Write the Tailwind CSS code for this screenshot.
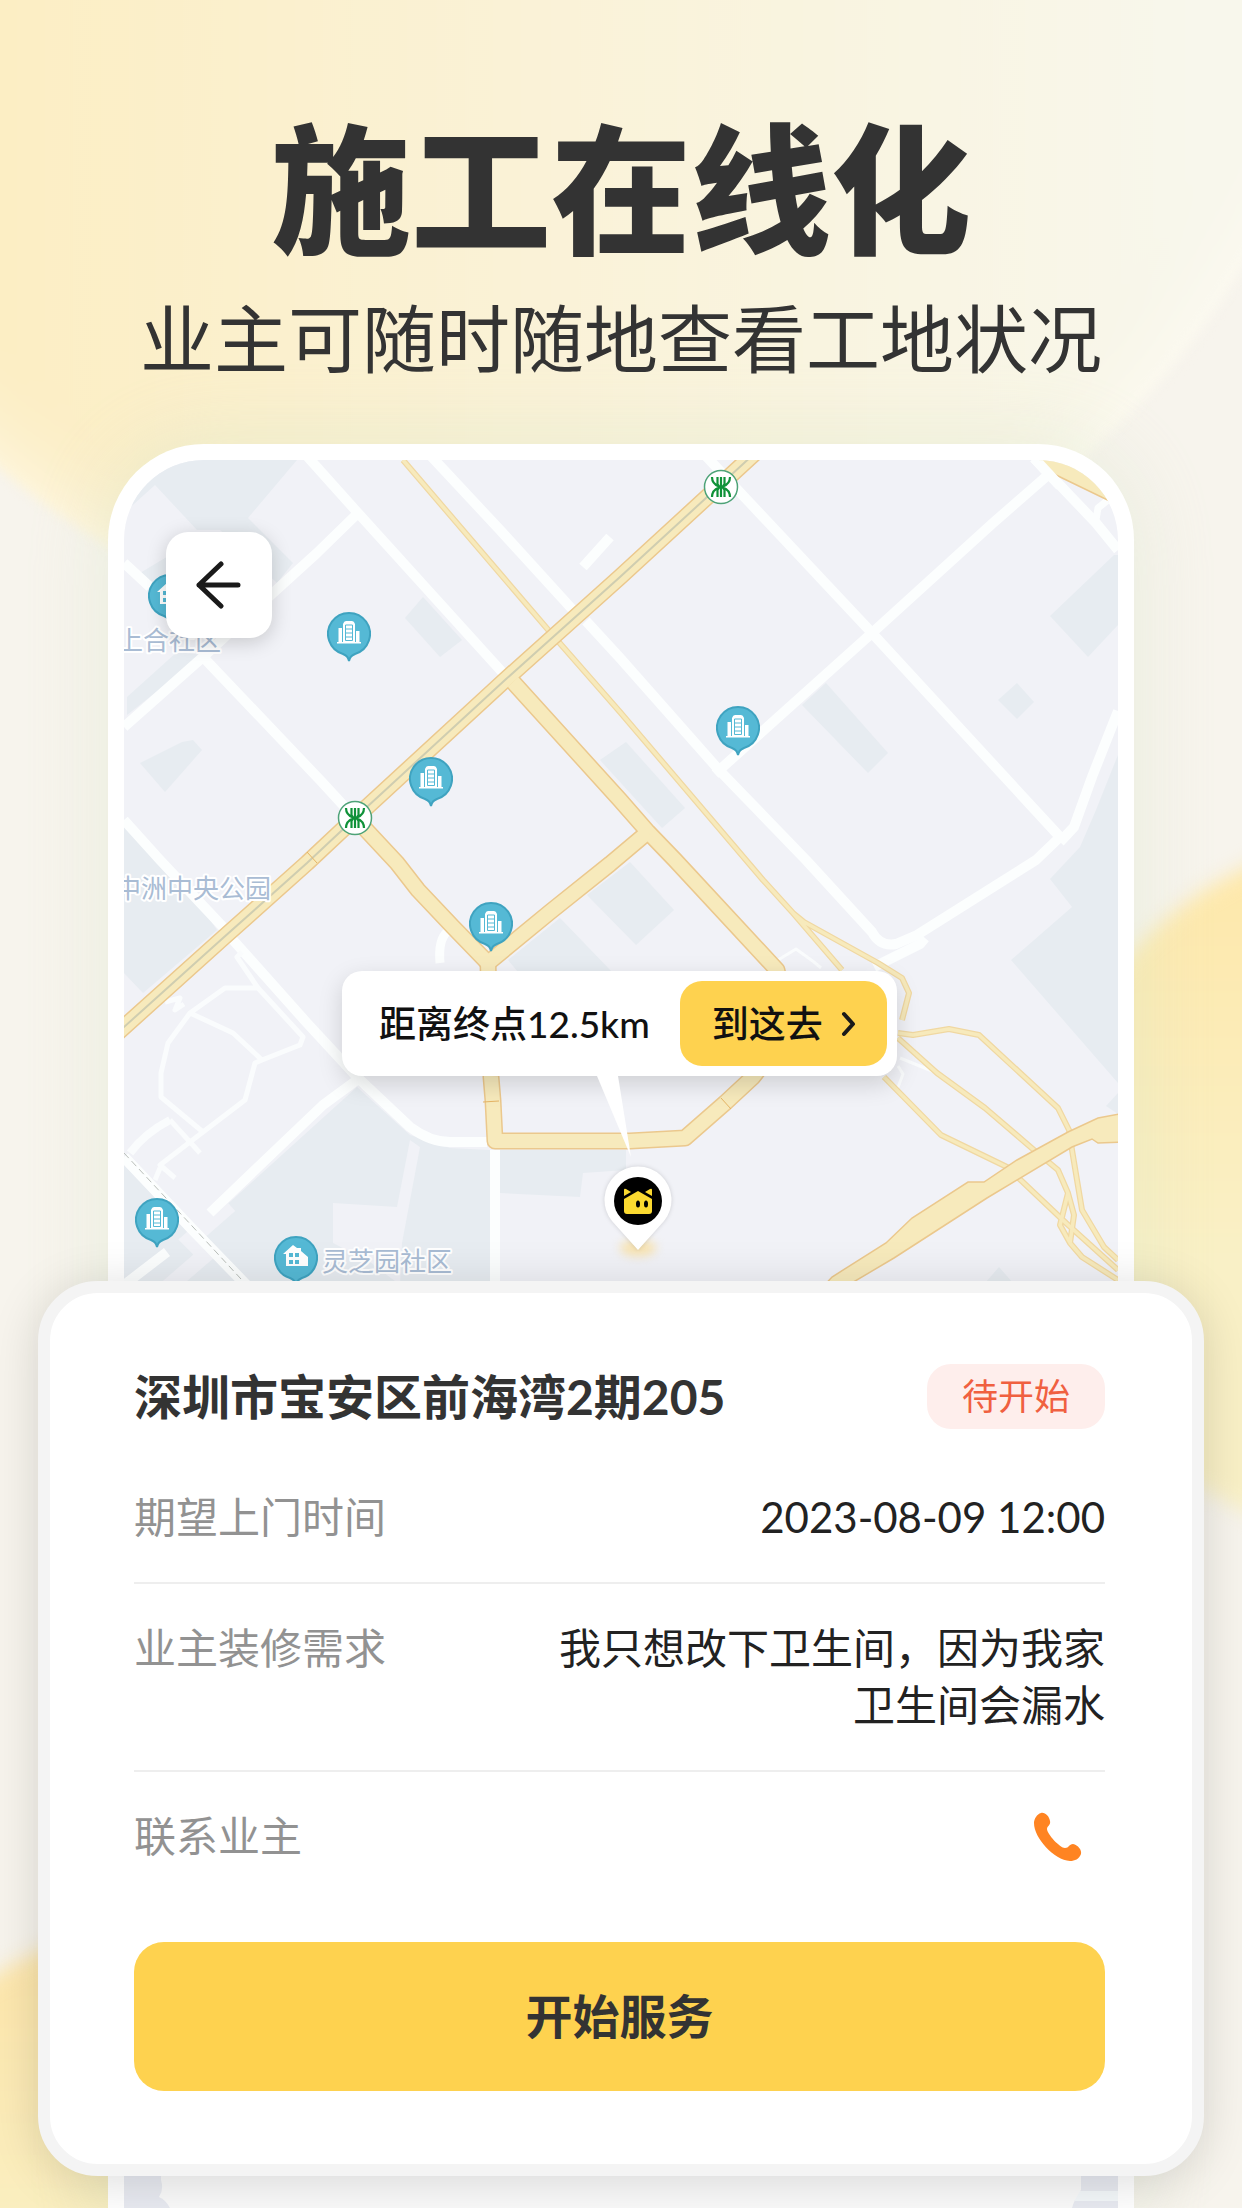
<!DOCTYPE html>
<html lang="zh-CN">
<head>
    <meta charset="UTF-8">
    <meta name="viewport" content="width=device-width, initial-scale=1.0">
    <title>施工在线化</title>
    <!-- Tailwind CSS -->
    <script src="https://cdn.jsdelivr.net/npm/@tailwindcss/browser@4"></script>
    <style>
        body {
            font-family: Lato, 'Noto Sans CJK SC', sans-serif;
        }
    </style>
</head>
<body class="bg-[#f7f4ed] text-[#333333]">
    <main class="relative min-h-screen overflow-hidden flex flex-col">
        <!-- Background glows -->
        <div class="absolute -left-[295px] -top-[995px] size-[1660px] rounded-full blur-[6px] bg-linear-to-r from-[#fceec4] from-18% via-[#faf2d7] via-50% to-[#f8f7ec] to-90% shadow-[inset_0_0_90px_rgba(255,252,244,0.9)]"></div>
        <div class="absolute left-[1040px] top-[835px] size-[710px] rounded-full blur-[10px] bg-linear-to-b from-[#fee7a8] to-[#f9f0c6] to-60%"></div>
        <div class="absolute -left-[170px] top-[1920px] size-[710px] rounded-full blur-[10px] bg-linear-to-b from-[#fee5a8] to-[#f9f0c4] to-50%"></div>

        <header class="relative pt-[109px] text-center">
            <h1 class="text-[140px] leading-[160px] font-black">施工在线化</h1>
            <p class="mt-[20px] text-[74px] leading-[100px]">业主可随时随地查看工地状况</p>
        </header>

        <section class="relative mt-[55px] grow grid">
            <!-- Map -->
            <div class="[grid-area:1/1] relative mx-[108px] border-16 border-b-0 border-white rounded-t-[96px] overflow-hidden bg-[#f1f2f7] shadow-[0_0_80px_rgba(215,228,200,0.45)]">
                <svg class="absolute inset-0 size-full" viewBox="124 460 994 1748" preserveAspectRatio="xMidYMin slice" fill="none" aria-label="地图">
                    <defs>
                        <symbol id="pin" viewBox="0 0 44 52">
                            <path d="M22 50c-1-4-2-5-6-7A21 21 0 1 1 28 43c-4 2-5 3-6 7z" fill="#55b9d5" stroke="#3fa3c0" stroke-width="2"/>
                        </symbol>
                        <symbol id="tower" viewBox="0 0 44 52">
                            <use href="#pin"/>
                            <path d="M10 31h24v1.500H10zM11.500 17h3.500v14.500h-3.500zM29 20h3.500v11.500H29z" fill="#fff"/>
                            <path d="M16 31.500V13q1-3 3-3h6q2 0 3 3v18.500z" fill="#fff"/>
                            <path d="M18.500 14h7v15.500h-7zM18.500 18h7M18.500 22h7M18.500 26h7" stroke="#55b9d5" stroke-width="1"/>
                        </symbol>
                        <symbol id="house" viewBox="0 0 44 52">
                            <use href="#pin"/>
                            <path d="M9 19 19 10l4 3h4v3l7 6v9H12V19z" fill="#fff"/>
                            <path d="M15 18h4v4h-4zM21 18h4v4h-4zM15 25h4v4h-4zM21 25h4v4h-4z" fill="#55b9d5"/>
                        </symbol>
                        <symbol id="metro" viewBox="0 0 36 36">
                            <circle cx="18" cy="18" r="16.500" fill="#fff" stroke="#4ea378" stroke-width="1.500"/>
                            <path d="M9 8c0 6 3 8 7 9.500v1C12 20 9 22 9 28M27 8c0 6-3 8-7 9.500v1C24 20 27 22 27 28M14.500 8v7l2 3-2 3v7M18 8v20M21.500 8v7l-2 3 2 3v7" stroke="#0f9138" stroke-width="2.200"/>
                        </symbol>
                    </defs>

                    <!-- Blocks -->
                    <g fill="#e7ecf1">
                        <path d="M297 460 248 518 293 563 277 583 220 530 197 530 155 485 124 513V460z"/>
                        <path d="M140 573 170 555 166 600z"/>
                        <path d="M423 597 462 640 440 657 405 618z"/>
                        <path d="M140 763 182 742 193 740 202 750 165 792z"/>
                        <path d="M127 715V697L177 652 203 655z"/>
                        <path d="M124 827 183 880 217 930 143 993 124 973z"/>
                        <path d="M826 683 888 753 868 773 802 705z"/>
                        <path d="M1017 683 1034 702 1017 719 998 700z"/>
                        <path d="M1114 555H1118V625L1088 657 1050 616z"/>
                        <path d="M1118 755 1096 810 1080 847 1050 879 1072 907 1011 960 1118 1083z"/>
                        <path d="M1118 1093 1106 1106 1118 1114z"/>
                        <path d="M626 742 685 808 662 828 600 760z"/>
                        <path d="M630 862 674 910 636 945 587 895z"/>
                        <path d="M560 918 612 972H518L508 960z"/>
                        <path d="M357 1087 410 1135 450 1148 490 1150 495 1290H124V1165L193 1238 210 1220z"/>
                        <path d="M500 1150H626V1170L583 1173 580 1197 500 1193z"/>
                        <path d="M999 1267 1019 1290H979z"/>
                    </g>
                    <path d="M333 1203 397 1207 410 1140 420 1147 402 1243 400 1285 370 1262 333 1243z" fill="#f1f2f7"/>
                    <path d="M230 1205 190 1240 205 1255 130 1320" stroke="#f1f2f7" stroke-width="16"/>

                    <!-- Side streets -->
                    <g stroke="#fcfefe" stroke-width="10" stroke-linejoin="round">
                        <path d="M306 455 358 513 503 673M358 513 317 553 273 593 203 657 124 727"/>
                        <path d="M430 455 500 530 572 609M586 621 620 658 719 770 806 860 872 932Q880 947 896 944L917 935 1036 860 1060 837"/>
                        <path d="M925 938 920 944 874 967M704 454 872 633 1060 837"/>
                        <path d="M715 774 872 633 993 523 1048 475M1034 458 1096 523 1118 550"/>
                        <path d="M1096 520 1098 508 1108 500" stroke-width="7"/>
                        <path d="M1060 842 1074 827 1092 777 1118 711"/>
                        <path d="M203 657 320 780 355 818M124 820 160 860 223 927M233 940 307 1023 357 1077 410 1127Q430 1142 450 1142H487"/>
                        <path d="M357 1080 323 1105 210 1213M495 1150V1300M124 563 150 587M610 537 583 567M167 1252 124 1285"/>
                        <path d="M447 932Q438 940 440 963" stroke-width="9"/>
                        <path d="M124 1157 193 1230 253 1292" stroke-width="11"/>
                    </g>
                    <path d="M124 1153 193 1227 253 1292" stroke="#b9beb9" stroke-width="1" stroke-dasharray="7 4"/>
                    <g stroke="#fafcfd" stroke-width="5" stroke-linejoin="round">
                        <path d="M225 988 190 1013 168 1043 161 1073V1097L203 1132 245 1100 255 1063 262 1060 300 1045 303 1037 258 988zM190 1013 233 1033 262 1060M258 988 237 957 242 952"/>
                        <path d="M203 1132 160 1165 175 1178M160 1168 155 1180M170 1120 200 1153M165 1002 180 998 175 1010 184 1004"/>
                        <path d="M170 1120Q145 1133 130 1153" stroke-width="8"/>
                        <path d="M778 960 796 949 814 962 821 968M900 1058 937 1073M898 1066 903 1074 897 1090" stroke-width="3"/>
                    </g>

                    <!-- Ramps -->
                    <g stroke-linejoin="round">
                        <path d="M403 460 550 632 620 712 763 880 793 913 842 970M793 913 804 922 878 963 902 978 909 993 902 1020M898 1033 913 1035 949 1029 979 1035 1058 1108 1069 1130 1072 1150 1082 1210 1104 1247 1118 1260M898 1038 937 1073 985 1108 1034 1150 1058 1170 1068 1193 1060 1225 1070 1243 1082 1257 1118 1280M884 1077 941 1135 1007 1167 1066 1223 1118 1270M1068 1193 1074 1215 1070 1243" stroke="#f0d8a2" stroke-width="6"/>
                        <path d="M403 460 550 632 620 712 763 880 793 913 842 970M793 913 804 922 878 963 902 978 909 993 902 1020M898 1033 913 1035 949 1029 979 1035 1058 1108 1069 1130 1072 1150 1082 1210 1104 1247 1118 1260M898 1038 937 1073 985 1108 1034 1150 1058 1170 1068 1193 1060 1225 1070 1243 1082 1257 1118 1280M884 1077 941 1135 1007 1167 1066 1223 1118 1270M1068 1193 1074 1215 1070 1243" stroke="#f7eabc" stroke-width="3.500"/>
                    </g>

                    <!-- Main roads -->
                    <g stroke="#ebc88d" stroke-width="17" stroke-linejoin="round">
                        <path d="M755 453 620 577 505 680 355 818 307 863 223 938 114 1036"/>
                        <path d="M513 682 620 800 648 832 675 860 777 970 790 1030 753 1077 725 1103 685 1138 630 1141H495L493 1101 491 1077 488 963"/>
                        <path d="M355 818 397 863 418 890 453 927 488 963 550 912 610 864 648 832"/>
                    </g>
                    <g stroke="#f7eabc" stroke-width="14" stroke-linejoin="round">
                        <path d="M755 453 620 577 505 680 355 818 307 863 223 938 114 1036"/>
                        <path d="M513 682 620 800 648 832 675 860 777 970 790 1030 753 1077 725 1103 685 1138 630 1141H495L493 1101 491 1077 488 963"/>
                        <path d="M355 818 397 863 418 890 453 927 488 963 550 912 610 864 648 832"/>
                    </g>
                    <path d="M755 453 620 577 505 680 355 818 307 863 223 938 114 1036" stroke="#cfcdb0" stroke-width="2"/>
                    <path d="M307 852 317 863M483 1102 499 1101M721 1098 731 1109" stroke="#e6b565" stroke-width="1"/>
                    <path d="M1124 1113 1098 1118 1068 1132 1017 1160 984 1182H968L912 1218 886 1243 832 1277 820 1290H840L894 1258 987 1198 1072 1147 1092 1139 1098 1143 1124 1142z" fill="#f7eabc" stroke="#ebc88d" stroke-width="1.500"/>
                    <path d="M1030 454 1056 475 1122 507V454z" fill="#f7eabc" stroke="#ebc88d" stroke-width="1.500"/>
                    <path d="M1034 458 1060 486" stroke="#fcfefe" stroke-width="10"/>

                    <!-- Places -->
                    <g font-size="26" fill="#a9bcd4" stroke="#fff" stroke-width="4" paint-order="stroke" stroke-linejoin="round">
                        <text x="117" y="650">上合社区</text>
                        <text x="115" y="898">中洲中央公园</text>
                        <text x="322" y="1271">灵芝园社区</text>
                    </g>
                    <use href="#metro" x="337" y="800" width="36" height="36"/>
                    <use href="#metro" x="703" y="469" width="36" height="36"/>
                    <use href="#house" x="148" y="573" width="44" height="52"/>
                    <use href="#tower" x="327" y="611" width="44" height="52"/>
                    <use href="#tower" x="409" y="756" width="44" height="52"/>
                    <use href="#tower" x="716" y="705" width="44" height="52"/>
                    <use href="#tower" x="469" y="901" width="44" height="52"/>
                    <use href="#tower" x="135" y="1197" width="44" height="52"/>
                    <use href="#house" x="274" y="1235" width="44" height="52"/>

                    <!-- Sheet below the card -->
                    <path d="M124 2150H1118V2208H124z" fill="#e8eaf1"/>
                    <path d="M1075 2196H1118" stroke="#f4f8fa" stroke-width="10"/>
                    <path d="M161 2150H1081V2190Q1074 2200 1072 2208H170Q166 2200 159 2197 164 2190 161 2180z" fill="#fafafa"/>
                </svg>

                <button type="button" aria-label="返回" class="absolute left-[42px] top-[72px] size-[106px] rounded-[22px] bg-white shadow-[0_4px_20px_rgba(0,0,0,0.18)] grid place-items-center">
                    <svg class="size-[48px]" viewBox="0 0 48 48" fill="none" stroke="#1a1a1a" stroke-width="5" stroke-linecap="round" stroke-linejoin="round"><path d="M26 3 4 24l22 21M4 24h39"/></svg>
                </button>

                <!-- Target marker -->
                <svg class="absolute left-[474px] top-[700px] w-[80px] h-[106px]" viewBox="0 0 80 106" fill="none">
                    <ellipse cx="40" cy="88" rx="18" ry="8" fill="#f8e3b0" class="blur-[5px]"/>
                    <path d="M40 90 14 61A33.500 33.500 0 1 1 66 61z" fill="#fff" class="drop-shadow-[0_0_2px_rgba(0,0,0,0.15)]"/>
                    <circle cx="40" cy="41" r="24" fill="#000"/>
                    <path d="M26 39 40 31 54 39V51Q54 54 51 54H29Q26 54 26 51z" fill="#fbd930"/>
                    <path d="M26 36V30Q26 28 28 29L33 32zM54 36V30Q54 28 52 29L47 32z" fill="#fbd930"/>
                    <ellipse cx="40" cy="44" rx="2" ry="3.500" fill="#000"/>
                    <ellipse cx="48" cy="44" rx="2" ry="3.500" fill="#000"/>
                </svg>

                <div class="absolute left-[218px] top-[511px] flex items-center h-[105px] pl-[37px] pr-[10px] gap-[30px] rounded-[20px] bg-white text-[#111111] text-[37px] font-medium whitespace-nowrap shadow-[0_8px_24px_rgba(0,0,0,0.15)]">
                    <span>距离终点12.5km</span>
                    <button type="button" class="flex items-center gap-[18px] h-[85px] w-[207px] pl-[32px] rounded-[22px] bg-[#fed24f]">
                        到这去
                        <svg class="w-[16px] h-[26px]" viewBox="0 0 16 26" fill="none" stroke="#1a1a1a" stroke-width="4" stroke-linecap="round" stroke-linejoin="round"><path d="m3 3 9 10-9 10"/></svg>
                    </button>
                    <svg class="absolute left-[255px] top-full w-[36px] h-[82px]" viewBox="0 0 36 82"><path d="M0 0h21l13 81z" fill="#fff"/></svg>
                </div>
            </div>

            <!-- Order card -->
            <article class="[grid-area:1/1] self-start relative mx-[38px] mt-[837px] mb-[32px] border-12 border-[#f4f4f4] rounded-[60px] bg-white pl-[84px] pr-[87px] pt-[71px] pb-[73px] shadow-[0_6px_50px_rgba(0,0,0,0.14)]">
                <div class="flex items-center justify-between">
                    <h2 class="text-[48px] leading-[65px] font-bold">深圳市宝安区前海湾2期205</h2>
                    <span class="rounded-[24px] bg-[#feeeec] px-[35px] text-[36px] leading-[65px] text-[#f06040]">待开始</span>
                </div>
                <dl class="mt-[60px] text-[42px] leading-[57px]">
                    <div class="flex justify-between pb-[36px] border-b-2 border-[#eeeeee]">
                        <dt class="text-[#929292]">期望上门时间</dt>
                        <dd class="text-[#222222]">2023-08-09 12:00</dd>
                    </div>
                    <div class="flex justify-between py-[36px] border-b-2 border-[#eeeeee]">
                        <dt class="text-[#929292]">业主装修需求</dt>
                        <dd class="w-[550px] text-right text-[#222222]">我只想改下卫生间，因为我家卫生间会漏水</dd>
                    </div>
                    <div class="flex items-center justify-between pt-[36px]">
                        <dt class="text-[#929292]">联系业主</dt>
                        <dd class="flex">
                            <a href="tel:" aria-label="联系业主" class="mr-[22px]">
                                <svg class="size-[50px]" viewBox="0 0 50 50"><path d="M8 1C4 2 1 7 1 11c0 15 20 37 36 38 5 0 9-2 11-7 1-4-3-9-8-10-4 0-4 4-8 4-5 0-18-14-18-19 0-3 4-4 3-8C16 4 12 0 8 1z" fill="#ff8422"/></svg>
                            </a>
                        </dd>
                    </div>
                </dl>
                <button type="button" class="mt-[77px] block w-full h-[149px] rounded-[30px] bg-[#fed24f] text-[47px] font-bold">开始服务</button>
            </article>
        </section>
    </main>
</body>
</html>
